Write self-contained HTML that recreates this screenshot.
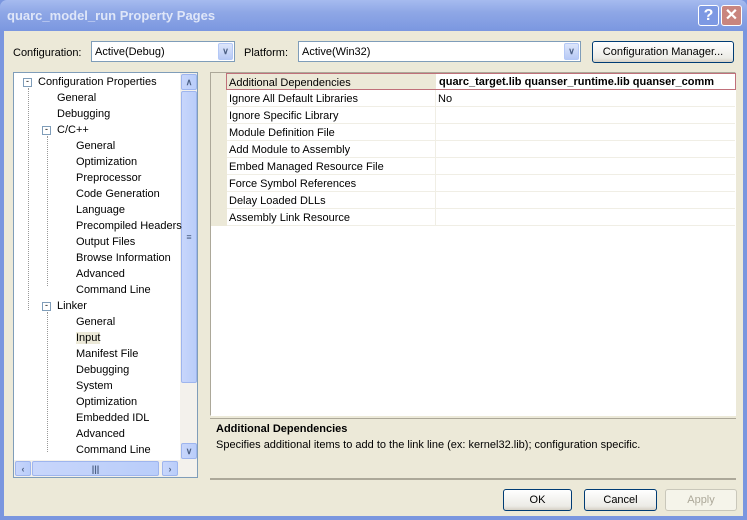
<!DOCTYPE html>
<html><head><style>
*{margin:0;padding:0;box-sizing:border-box}
body{width:747px;height:520px;overflow:hidden;background:#7a96df;font-family:"Liberation Sans",sans-serif;font-size:11px;color:#000;position:relative}
.a{position:absolute}
#title{left:0;top:0;width:747px;height:31px;background:linear-gradient(#a6bbef,#8ea7e6 40%,#7b97e0);border-radius:7px 7px 0 0}
#title span{position:absolute;left:7px;top:8px;color:#dfe6f8;font-weight:bold;font-size:13px;font-family:"Liberation Sans",sans-serif}
#body{left:4px;top:31px;width:739px;height:485px;background:#ece9d8}
.tb{width:21px;height:21px;top:5px;border:1px solid #fff;border-radius:3px;color:#fff;font-weight:bold;font-size:16px;text-align:center;line-height:19px;font-family:"Liberation Sans",sans-serif}
.combo{background:#fff;border:1px solid #7f9db9;height:21px}
.combo span{position:absolute;left:3px;top:4px}
.dd{position:absolute;right:1px;top:1px;width:15px;height:17px;background:linear-gradient(#dde6fb,#b7c9f5);border:1px solid #b4c8f6;border-radius:2px;color:#4d6185;font-size:9px;text-align:center;line-height:15px;font-weight:bold}
.btn{border:1px solid #003c74;border-radius:3px;background:linear-gradient(#fff,#ecebe6 80%,#d6d0c5);text-align:center;line-height:20px;height:22px}
.ti{position:absolute;white-space:nowrap}
.row{position:absolute;left:227px;width:508px;height:17px;border-bottom:1px solid #f0eee5}
.row span{position:absolute;left:2px;top:3px}
.sb{background:linear-gradient(90deg,#c8d6fb,#b9cdfa);border:1px solid #9eb5ee;border-radius:2px;color:#4d6185;font-size:9px;text-align:center;line-height:14px;font-weight:bold}
</style></head><body>
<div id="title" class="a"><span>quarc_model_run Property Pages</span>
<div class="a tb" style="left:698px;background:#7d99e3">?</div>
<div class="a tb" style="left:721px;background:#c9857e">✕</div></div>
<div id="body" class="a"></div>

<div class="a" style="left:13px;top:47px">Configuration:</div>
<div class="a combo" style="left:91px;top:41px;width:144px"><span>Active(Debug)</span><div class="dd">∨</div></div>
<div class="a" style="left:244px;top:47px">Platform:</div>
<div class="a combo" style="left:298px;top:41px;width:283px"><span>Active(Win32)</span><div class="dd">∨</div></div>
<div class="a btn" style="left:592px;top:41px;width:142px">Configuration Manager...</div>

<!-- tree -->
<div class="a" style="left:13px;top:72px;width:185px;height:406px;background:#fff;border:1px solid #7f9db9"></div>
<div class="a" style="left:180px;top:73px;width:17px;height:387px;background:#f3f1ec"></div>
<div class="a sb" style="left:181px;top:74px;width:16px;height:16px">∧</div>
<div class="a sb" style="left:181px;top:91px;width:16px;height:292px;line-height:290px">≡</div>
<div class="a sb" style="left:181px;top:443px;width:16px;height:16px">∨</div>
<div class="a" style="left:14px;top:460px;width:183px;height:17px;background:#f3f1ec"></div>
<div class="a sb" style="left:15px;top:461px;width:16px;height:15px">‹</div>
<div class="a sb" style="left:32px;top:461px;width:127px;height:15px">|||</div>
<div class="a sb" style="left:162px;top:461px;width:16px;height:15px">›</div>
<div class="a" style="left:28px;top:88px;height:222px;border-left:1px dotted #999"></div>
<div class="a" style="left:47px;top:136px;height:150px;border-left:1px dotted #999"></div>
<div class="a" style="left:47px;top:312px;height:140px;border-left:1px dotted #999"></div>
<div class="a" style="left:23px;top:78px;width:9px;height:9px;border:1px solid #7f9db9;background:#fff;font-size:9px;line-height:5px;text-align:center">-</div>
<div class="a" style="left:42px;top:126px;width:9px;height:9px;border:1px solid #7f9db9;background:#fff;font-size:9px;line-height:5px;text-align:center">-</div>
<div class="a" style="left:42px;top:302px;width:9px;height:9px;border:1px solid #7f9db9;background:#fff;font-size:9px;line-height:5px;text-align:center">-</div>
<div class="ti" style="left:38px;top:76px">Configuration Properties</div>
<div class="ti" style="left:57px;top:92px">General</div>
<div class="ti" style="left:57px;top:108px">Debugging</div>
<div class="ti" style="left:57px;top:124px">C/C++</div>
<div class="ti" style="left:76px;top:140px">General</div>
<div class="ti" style="left:76px;top:156px">Optimization</div>
<div class="ti" style="left:76px;top:172px">Preprocessor</div>
<div class="ti" style="left:76px;top:188px">Code Generation</div>
<div class="ti" style="left:76px;top:204px">Language</div>
<div class="ti" style="left:76px;top:220px">Precompiled Headers</div>
<div class="ti" style="left:76px;top:236px">Output Files</div>
<div class="ti" style="left:76px;top:252px">Browse Information</div>
<div class="ti" style="left:76px;top:268px">Advanced</div>
<div class="ti" style="left:76px;top:284px">Command Line</div>
<div class="ti" style="left:57px;top:300px">Linker</div>
<div class="ti" style="left:76px;top:316px">General</div>
<div class="ti" style="left:76px;top:332px;background:#ece9d8">Input</div>
<div class="ti" style="left:76px;top:348px">Manifest File</div>
<div class="ti" style="left:76px;top:364px">Debugging</div>
<div class="ti" style="left:76px;top:380px">System</div>
<div class="ti" style="left:76px;top:396px">Optimization</div>
<div class="ti" style="left:76px;top:412px">Embedded IDL</div>
<div class="ti" style="left:76px;top:428px">Advanced</div>
<div class="ti" style="left:76px;top:444px">Command Line</div>

<!-- grid -->
<div class="a" style="left:210px;top:72px;width:526px;height:344px;background:#fff;border:1px solid #aca899;border-right-color:#fff;border-bottom-color:#fff"></div>
<div class="a" style="left:211px;top:73px;width:16px;height:153px;background:#ece9d8"></div>
<div class="a" style="left:435px;top:90px;height:136px;border-left:1px solid #f0eee5"></div>
<div class="row" style="top:73px;background:#ece9d8;border:1px solid #c0707a;left:226px;width:510px"><span>Additional Dependencies</span>
<span style="left:209px;right:0;background:#fff;top:0;bottom:0;padding:2px 0 0 3px;font-weight:bold;overflow:hidden;white-space:nowrap">quarc_target.lib quanser_runtime.lib quanser_comm</span></div>
<div class="row" style="top:90px"><span>Ignore All Default Libraries</span><span style="left:211px">No</span></div>
<div class="row" style="top:107px"><span>Ignore Specific Library</span></div>
<div class="row" style="top:124px"><span>Module Definition File</span></div>
<div class="row" style="top:141px"><span>Add Module to Assembly</span></div>
<div class="row" style="top:158px"><span>Embed Managed Resource File</span></div>
<div class="row" style="top:175px"><span>Force Symbol References</span></div>
<div class="row" style="top:192px"><span>Delay Loaded DLLs</span></div>
<div class="row" style="top:209px"><span>Assembly Link Resource</span></div>
<div class="a" style="left:210px;top:418px;width:526px;height:62px;border-top:1px solid #aca899;border-bottom:2px solid #aca899"></div>
<div class="a" style="left:216px;top:423px;font-weight:bold">Additional Dependencies</div>
<div class="a" style="left:216px;top:439px">Specifies additional items to add to the link line (ex: kernel32.lib); configuration specific.</div>

<div class="a btn" style="left:503px;top:489px;width:69px">OK</div>
<div class="a btn" style="left:584px;top:489px;width:73px">Cancel</div>
<div class="a btn" style="left:665px;top:489px;width:72px;border-color:#c9c7ba;color:#aca899;background:#f5f4ea">Apply</div>
</body></html>
